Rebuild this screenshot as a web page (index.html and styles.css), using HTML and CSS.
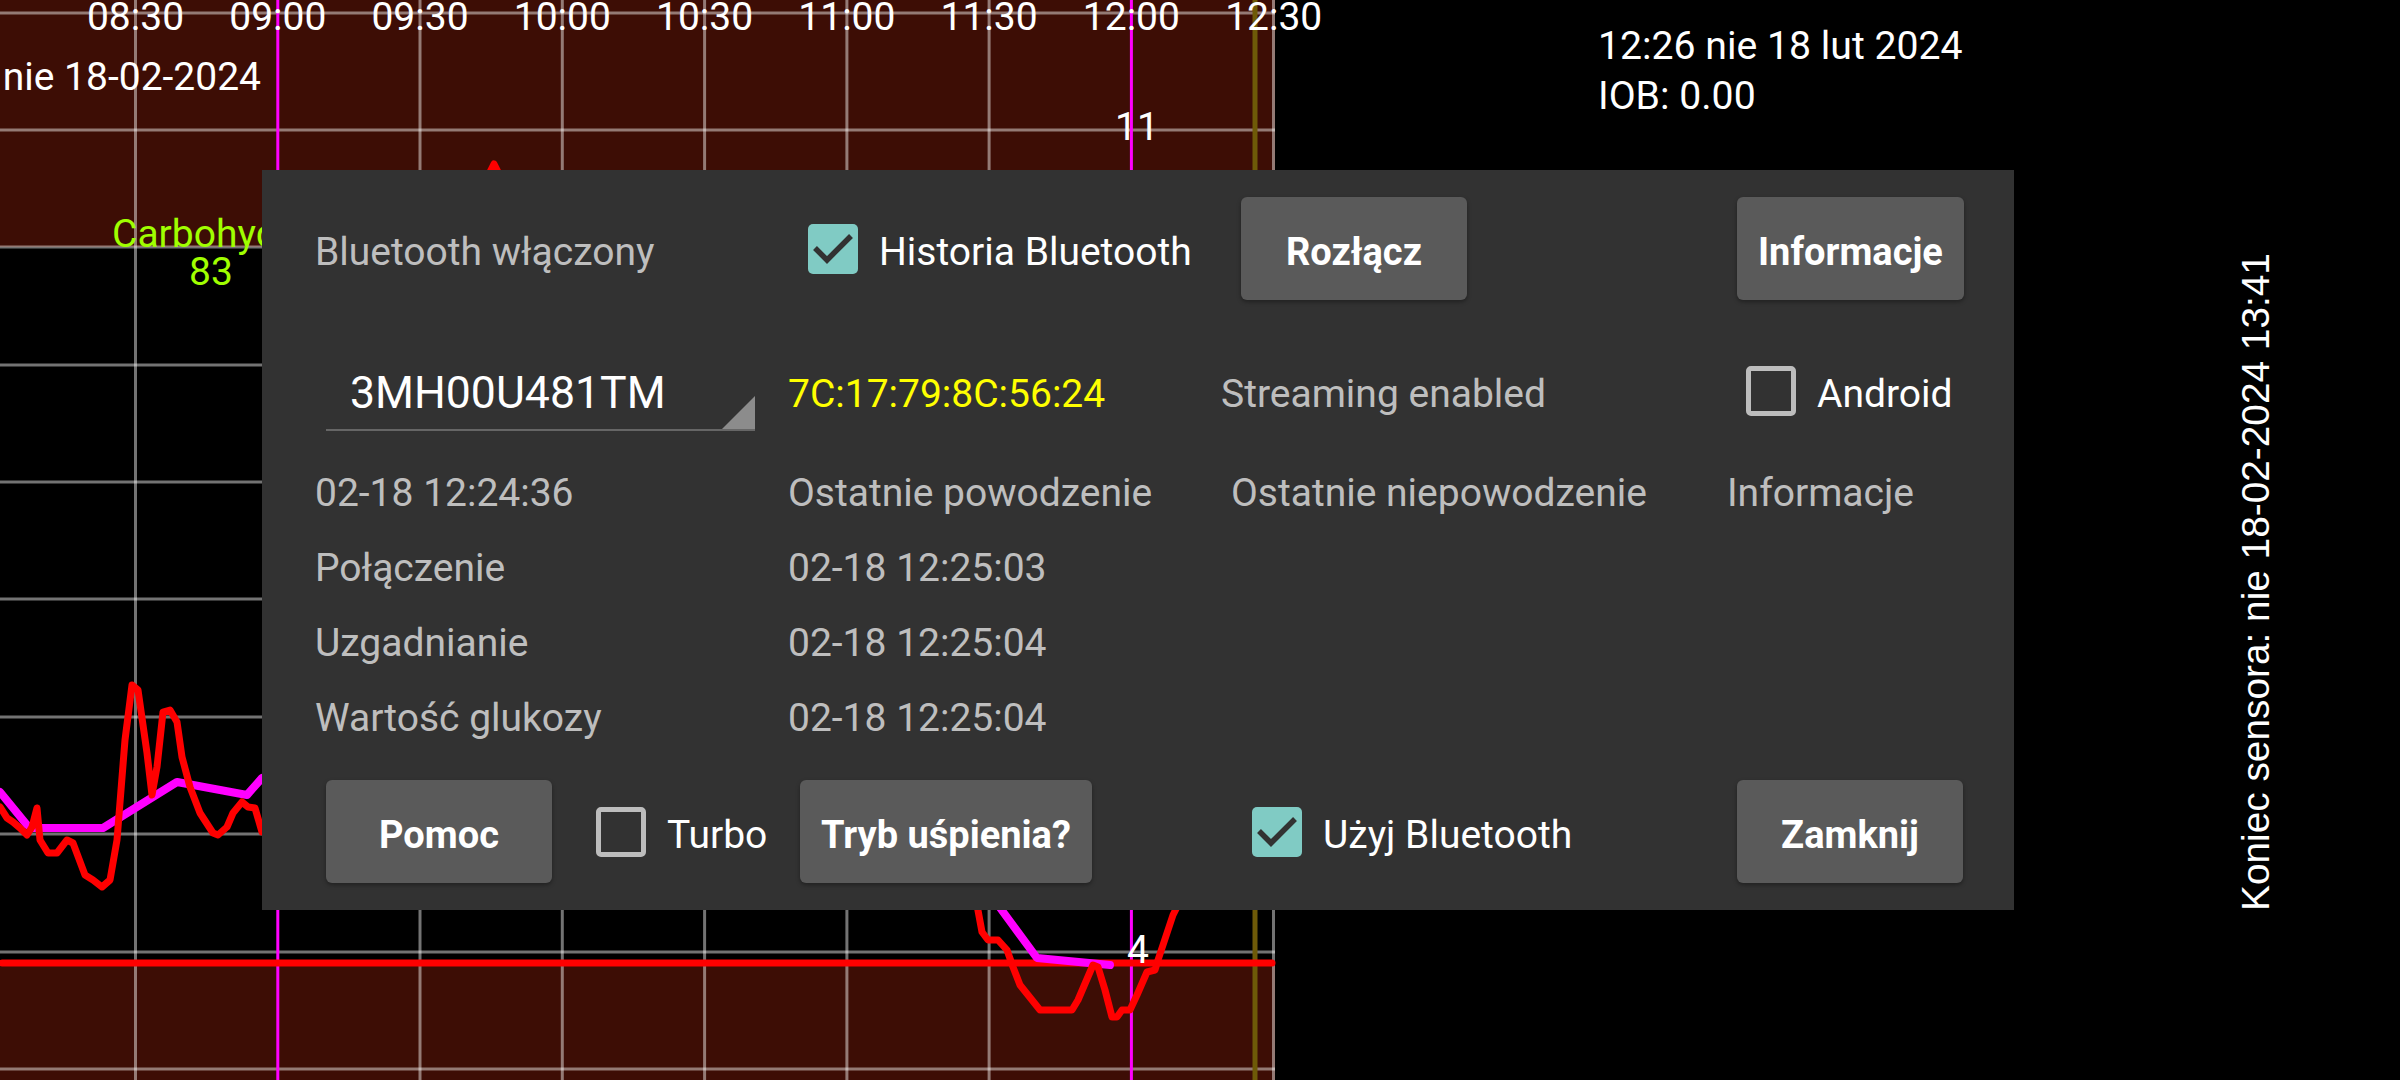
FILE: index.html
```html
<!DOCTYPE html>
<html lang="pl">
<head>
<meta charset="utf-8">
<title>xDrip</title>
<link rel="stylesheet" href="styles.css">
</head>
<body>
<div class="screen">
  <div class="graph">
    <svg class="chart" width="1275" height="1080" viewBox="0 0 1275 1080">
      <rect x="0" y="0" width="1275" height="1080" fill="#000"/>
      <rect x="0" y="0" width="1275" height="247" fill="#3d0d05"/>
      <rect x="0" y="963" width="1275" height="117" fill="#3d0d05"/>
      <g stroke="rgba(255,255,255,0.45)" stroke-width="3">
        <line x1="135.5" y1="0" x2="135.5" y2="1080"/>
        <line x1="420" y1="0" x2="420" y2="1080"/>
        <line x1="562.3" y1="0" x2="562.3" y2="1080"/>
        <line x1="704.6" y1="0" x2="704.6" y2="1080"/>
        <line x1="846.9" y1="0" x2="846.9" y2="1080"/>
        <line x1="989.1" y1="0" x2="989.1" y2="1080"/>
        <line x1="1273.5" y1="0" x2="1273.5" y2="1080"/>
        <line x1="0" y1="13" x2="1275" y2="13"/>
        <line x1="0" y1="130" x2="1275" y2="130"/>
        <line x1="0" y1="247" x2="1275" y2="247"/>
        <line x1="0" y1="365" x2="1275" y2="365"/>
        <line x1="0" y1="482" x2="1275" y2="482"/>
        <line x1="0" y1="599" x2="1275" y2="599"/>
        <line x1="0" y1="717" x2="1275" y2="717"/>
        <line x1="0" y1="834" x2="1275" y2="834"/>
        <line x1="0" y1="952" x2="1275" y2="952"/>
        <line x1="0" y1="1069" x2="1275" y2="1069"/>
      </g>
      <g stroke="#ff00ff" stroke-width="3">
        <line x1="277.8" y1="0" x2="277.8" y2="1080"/>
        <line x1="1131.4" y1="0" x2="1131.4" y2="1080"/>
      </g>
      <line x1="1255" y1="0" x2="1255" y2="1080" stroke="#6e5a08" stroke-width="5"/>
      <line x1="2" y1="963" x2="1272" y2="963" stroke="#ff0000" stroke-width="7" stroke-linecap="round"/>
      <g fill="none" stroke-linejoin="round" stroke-linecap="round">
        <polyline stroke="#ff00ff" stroke-width="8" points="0,792 27,825 33,828 103,828 177,782 247,795 262,778"/>
        <polyline stroke="#ff00ff" stroke-width="8" points="998,905 1037,958 1110,965"/>
        <polyline stroke="#ff0000" stroke-width="7" points="0,807 7,818 13,822 20,828 27,835 32,827 37,808 40,840 48,853 57,853 67,840 73,843 85,875 93,880 102,887 110,880 117,840 125,740 132,685 138,690 147,753 152,795 157,767 163,712 170,710 177,722 182,757 190,787 200,813 213,833 218,835 227,827 233,813 242,802 248,807 255,808 262,832"/>
        <polyline stroke="#ff0000" stroke-width="7" points="977,905 982,932 988,940 998,940 1007,950 1013,967 1020,985 1040,1010 1072,1010 1078,1000 1093,965 1098,967 1105,990 1112,1017 1117,1017 1122,1010 1130,1010 1137,995 1147,972 1155,970 1158,960 1167,933 1173,915 1178,905"/>
        <polyline stroke="#ff0000" stroke-width="7" points="488,176 494,164 500,176"/>
      </g>
      <g class="axis" fill="#fff" text-anchor="middle">
        <text x="135.5" y="30">08:30</text>
        <text x="277.8" y="30">09:00</text>
        <text x="420" y="30">09:30</text>
        <text x="562.3" y="30">10:00</text>
        <text x="704.6" y="30">10:30</text>
        <text x="846.9" y="30">11:00</text>
        <text x="989.1" y="30">11:30</text>
        <text x="1131.4" y="30">12:00</text>
        <text x="1273.7" y="30">12:30</text>
        <text x="1137" y="140">11</text>
        <text x="1138" y="963">4</text>
      </g>
      <text class="axis" x="261" y="90" fill="#fff" text-anchor="end">nie 18-02-2024</text>
      <text class="axis" x="112" y="247" fill="#a0ff00">Carbohydrates</text>
      <text class="axis" x="211" y="285" fill="#a0ff00" text-anchor="middle">83</text>
    </svg>
  </div>
  <div class="side">
    <div class="status">
      <div>12:26 nie 18 lut 2024</div>
      <div>IOB: 0.00</div>
    </div>
    <div class="sensor-end">Koniec sensora: nie 18-02-2024 13:41</div>
  </div>

  <div class="dialog">
    <div class="row r1">
      <div class="muted lowered">Bluetooth włączony</div>
      <div class="check">
        <svg class="box" width="50" height="50" viewBox="0 0 50 50"><rect width="50" height="50" rx="5" fill="#80cbc4"/><polyline points="7,24 19,36 43,12" fill="none" stroke="#323232" stroke-width="5.5"/></svg>
        <span class="lowered">Historia Bluetooth</span>
      </div>
      <div class="btn">Rozłącz</div>
      <div class="btn">Informacje</div>
    </div>
    <div class="row r2">
      <div class="spinner">3MH00U481TM</div>
      <div class="mac lowered">7C:17:79:8C:56:24</div>
      <div class="muted lowered">Streaming enabled</div>
      <div class="check">
        <span class="box empty"></span>
        <span class="lowered">Android</span>
      </div>
    </div>
    <div class="row r3 muted">
      <div>02-18 12:24:36</div>
      <div>Ostatnie powodzenie</div>
      <div>Ostatnie niepowodzenie</div>
      <div>Informacje</div>
    </div>
    <div class="row r3 muted">
      <div>Połączenie</div>
      <div>02-18 12:25:03</div>
      <div></div>
      <div></div>
    </div>
    <div class="row r3 muted">
      <div>Uzgadnianie</div>
      <div>02-18 12:25:04</div>
      <div></div>
      <div></div>
    </div>
    <div class="row r3 muted">
      <div>Wartość glukozy</div>
      <div>02-18 12:25:04</div>
      <div></div>
      <div></div>
    </div>
    <div class="row r7">
      <div class="btn first">Pomoc</div>
      <div class="check">
        <span class="box empty"></span>
        <span class="lowered">Turbo</span>
      </div>
      <div class="btn">Tryb uśpienia?</div>
      <div class="check">
        <svg class="box" width="50" height="50" viewBox="0 0 50 50"><rect width="50" height="50" rx="5" fill="#80cbc4"/><polyline points="7,24 19,36 43,12" fill="none" stroke="#323232" stroke-width="5.5"/></svg>
        <span class="lowered">Użyj Bluetooth</span>
      </div>
      <div class="btn">Zamknij</div>
    </div>
  </div>
</div>
</body>
</html>
```
FILE: styles.css
```css
html, body {
  margin: 0;
  padding: 0;
  background: #000;
}
body {
  width: 2400px;
  height: 1080px;
  overflow: hidden;
  font-family: Roboto, "Noto Sans", sans-serif;
}
.screen {
  position: relative;
  display: flex;
  width: 2400px;
  height: 1080px;
}
.graph {
  flex: none;
  width: 1275px;
  height: 1080px;
}
.chart {
  display: block;
  overflow: visible;
}
.axis {
  font-family: Roboto, sans-serif;
  font-size: 39px;
}
.side {
  flex: 1;
  position: relative;
}
.status {
  padding: 21px 0 0 323px;
  color: #fff;
  font-size: 39.2px;
  line-height: 50px;
}
.sensor-end {
  position: absolute;
  left: 631px;
  top: 562px;
  width: 700px;
  height: 40px;
  line-height: 40px;
  text-align: center;
  white-space: nowrap;
  color: #fff;
  font-family: "Liberation Sans", Arial, sans-serif;
  font-size: 38.8px;
  transform: rotate(-90deg);
}
.dialog {
  position: absolute;
  left: 262px;
  top: 170px;
  width: 1752px;
  height: 740px;
  box-sizing: border-box;
  padding: 27px 0 27px 53px;
  background: #323232;
  font-size: 39px;
  color: #fff;
}
.row {
  display: grid;
  align-items: center;
  justify-items: start;
  white-space: nowrap;
}
.r1 {
  height: 103px;
  grid-template-columns: 493px 433px 496px auto;
}
.r2 {
  height: 128px;
  margin-top: 27px;
  grid-template-columns: 473px 433px 525px auto;
}
.r3 {
  height: 75px;
  grid-template-columns: 473px 443px 496px auto;
}
.r7 {
  height: 103px;
  margin-top: 25px;
  grid-template-columns: 281px 204px 452px 485px auto;
}
.lowered {
  padding-top: 6px;
}
.muted {
  color: rgba(255, 255, 255, 0.7);
}
.check {
  display: flex;
  align-items: center;
  gap: 21px;
  color: #fff;
}
.box {
  display: block;
  width: 50px;
  height: 50px;
  flex: none;
}
.box.empty {
  box-sizing: border-box;
  border: 5px solid #bdbdbd;
  border-radius: 5px;
}
.btn {
  box-sizing: border-box;
  height: 103px;
  min-width: 226px;
  padding: 6px 21px 0;
  display: flex;
  align-items: center;
  justify-content: center;
  background: #5a5a5a;
  border-radius: 6px;
  box-shadow: 0 2px 4px rgba(0, 0, 0, 0.35);
  color: #fff;
  font-weight: 700;
  font-size: 38px;
}
.btn.first {
  margin-left: 11px;
}
.spinner {
  position: relative;
  box-sizing: border-box;
  margin-left: 11px;
  width: 429px;
  height: 80px;
  padding: 6px 0 0 24px;
  display: flex;
  align-items: center;
  border-bottom: 2px solid #666;
  font-size: 44.6px;
  color: #fff;
}
.spinner::after {
  content: "";
  position: absolute;
  right: 0;
  bottom: 0;
  width: 33px;
  height: 33px;
  background: #8c8c8c;
  clip-path: polygon(100% 0, 100% 100%, 0 100%);
}
.mac {
  color: #ffff00;
}
```
